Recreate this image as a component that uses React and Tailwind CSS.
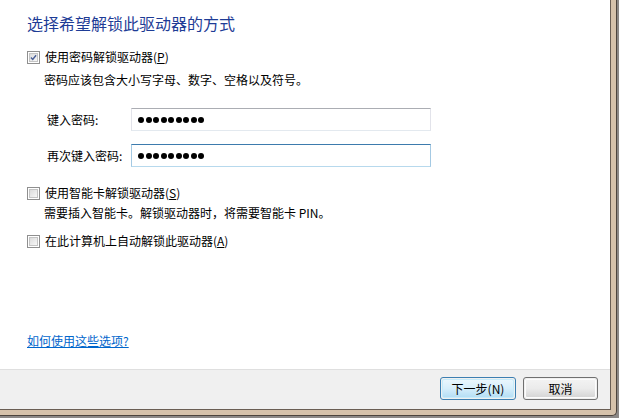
import React from 'react';

const font = { fontFamily: '"Noto Sans CJK SC", "Noto Sans", sans-serif' };

const Checkbox = ({ checked }) => (
  <div className="w-[13px] h-[13px] border border-[#8f8f8f] bg-white p-[1px] shrink-0">
    <div className="w-full h-full border border-[#c4c4c4] bg-gradient-to-br from-[#dcdcdc] to-[#f7f7f7] flex items-center justify-center">
      {checked && (
        <svg width="9" height="9" viewBox="0 0 9 9">
          <path d="M1.2 4.6 L3.5 7 L7.8 1.6" fill="none" stroke="#4a5f97" strokeWidth="1.8" />
        </svg>
      )}
    </div>
  </div>
);

const Dots = () => (
  <div className="flex items-center gap-[1.5px]">
    {[0, 1, 2, 3, 4, 5, 6, 7, 8].map((i) => (
      <div key={i} className="w-[6px] h-[6px] rounded-full bg-black" />
    ))}
  </div>
);

const App = () => {
  return (
    <div className="w-[619px] h-[418px] bg-[#8c8886] pr-[2px] pb-[2px] overflow-hidden" style={font}>
      <div className="w-full h-full bg-[#d6c2ab] border-r border-b border-[#4d443d] pr-[5px] pb-[5px] rounded-br-[5px]">
        <div className="w-full h-full border-r border-b border-[#6a5e54] flex flex-col text-[12px] text-black">
          {/* content */}
          <div className="h-[369px] bg-white flex flex-col pl-[27px]">
            <h2 className="mt-[12px] text-[16px] leading-[22px] text-[#1e3c96]">选择希望解锁此驱动器的方式</h2>

            <div className="mt-[15px] flex items-center gap-[5px] leading-[16px]">
              <Checkbox checked />
              <span>使用密码解锁驱动器(<span className="underline">P</span>)</span>
            </div>
            <p className="mt-[7px] ml-[17px] leading-[16px]">密码应该包含大小写字母、数字、空格以及符号。</p>

            <div className="mt-[20px] flex items-center">
              <span className="ml-[20px] w-[84px]">键入密码:</span>
              <div className="w-[300px] h-[23px] border border-[#e2e3ea] border-t-[#abadb3] border-b-[#e3e9ef] bg-white flex items-center pl-[6px]">
                <Dots />
              </div>
            </div>
            <div className="mt-[13px] flex items-center">
              <span className="ml-[20px] w-[84px]">再次键入密码:</span>
              <div className="w-[300px] h-[23px] border border-[#a4c9e3] border-t-[#3d7bad] border-b-[#b7d9ed] bg-white flex items-center pl-[6px]">
                <Dots />
              </div>
            </div>

            <div className="mt-[18px] flex items-center gap-[5px] leading-[16px]">
              <Checkbox />
              <span>使用智能卡解锁驱动器(<span className="underline">S</span>)</span>
            </div>
            <p className="mt-[4px] ml-[17px] leading-[16px]">需要插入智能卡。解锁驱动器时，将需要智能卡 PIN。</p>
            <div className="mt-[12px] flex items-center gap-[5px] leading-[16px]">
              <Checkbox />
              <span>在此计算机上自动解锁此驱动器(<span className="underline">A</span>)</span>
            </div>

            <a className="mt-auto mb-[20px] leading-[16px] text-[#0066cc] underline self-start">如何使用这些选项?</a>
          </div>

          {/* footer */}
          <div className="flex-1 bg-[#f0f0f0] border-t border-[#dfdfdf] flex justify-end items-start pt-[7px] pr-[12px] gap-[7px]">
            <button className="w-[76px] h-[23px] rounded-[3px] border border-[#3c7fb1] p-[1px]">
              <div className="w-full h-full rounded-[2px] border border-[#c6ecfb] bg-gradient-to-b from-[#e9f6fd] via-[#d6eefb] to-[#b6dff5] flex items-center justify-center">
                下一步(N)
              </div>
            </button>
            <button className="w-[75px] h-[23px] rounded-[3px] border border-[#707070] p-[1px]">
              <div className="w-full h-full rounded-[2px] border border-[#fcfcfc] bg-gradient-to-b from-[#f2f2f2] via-[#ebebeb] to-[#d6d6d6] flex items-center justify-center">
                取消
              </div>
            </button>
          </div>
        </div>
      </div>
    </div>
  );
};

export default App;
